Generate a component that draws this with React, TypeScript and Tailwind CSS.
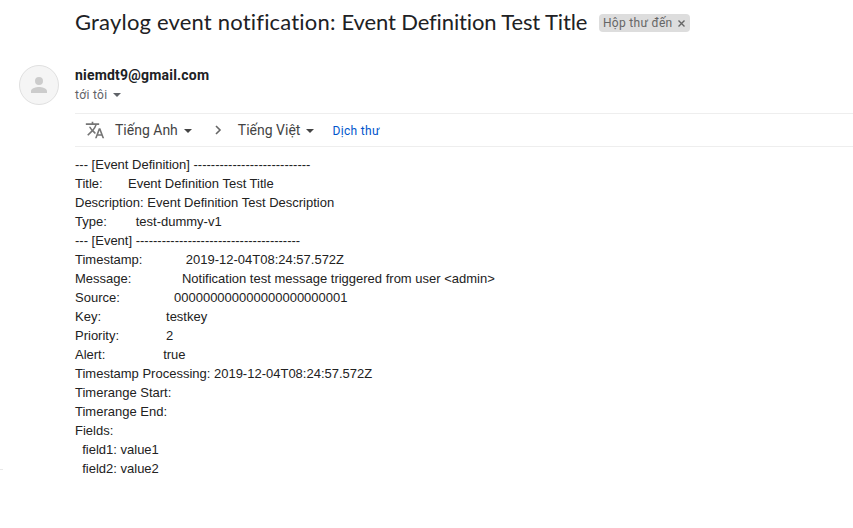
const lines = [
  '--- [Event Definition] ---------------------------',
  'Title:       Event Definition Test Title',
  'Description: Event Definition Test Description',
  'Type:        test-dummy-v1',
  '--- [Event] --------------------------------------',
  'Timestamp:            2019-12-04T08:24:57.572Z',
  'Message:              Notification test message triggered from user <admin>',
  'Source:               000000000000000000000001',
  'Key:                  testkey',
  'Priority:             2',
  'Alert:                true',
  'Timestamp Processing: 2019-12-04T08:24:57.572Z',
  'Timerange Start:',
  'Timerange End:',
  'Fields:',
  '  field1: value1',
  '  field2: value2',
];

function Caret({ className = '' }: { className?: string }) {
  return (
    <svg width="8" height="4" viewBox="0 0 8 4" className={className} fill="currentColor">
      <path d="M0 0h8L4 4z" />
    </svg>
  );
}

export default function App() {
  return (
    <main className="relative h-[528px] w-[853px] overflow-hidden bg-white font-[Roboto,sans-serif] text-[#202124]">
      <header className="flex h-[46px] items-center pl-[75px]">
        <h1 className="w-[524px] shrink-0 whitespace-nowrap pb-[3px] font-[Lato,sans-serif] text-[22px] leading-7">
          <span className="tracking-[0.19px]">Graylog event notification: </span>
          <span className="tracking-[-0.13px]">Event Definition Test Title</span>
        </h1>
        <div className="flex h-[18px] items-center rounded bg-[#ddd] pl-1 pr-[5px] text-[12px] tracking-[0.3px] text-[#666]">
          <span>Hộp thư đến</span>
          <svg className="ml-[5px]" width="7" height="7" viewBox="0 0 7 7" stroke="#666" strokeWidth="1.4"><path d="M.5 .5l6 6M6.5 .5l-6 6" /></svg>
        </div>
      </header>
      <section className="flex h-[67px] pl-[19px] pt-[19px]">
        <div className="flex size-10 items-center justify-center rounded-full border border-[#e0e0e0] bg-[#f5f5f5]">
          <svg width="24" height="24" viewBox="0 0 24 24" fill="#ccc"><path d="M12 12a4 4 0 1 0 0-8 4 4 0 0 0 0 8zm0 2c-2.67 0-8 1.34-8 4v2h16v-2c0-2.66-5.33-4-8-4z" /></svg>
        </div>
        <div className="pl-4">
          <div className="text-sm font-bold leading-5 tracking-[0.2px]">niemdt9@gmail.com</div>
          <div className="flex items-center text-[12px] leading-5 tracking-[0.3px] text-[#5f6368]">tới tôi<Caret className="ml-[6px]" /></div>
        </div>
      </section>
      <nav className="ml-[75px] flex h-[34px] items-center border-y border-[#eee] text-sm text-[#444]">
        <svg className="ml-[10px]" width="20" height="20" viewBox="0 0 24 24" fill="#757575"><path d="M12.87 15.07l-2.54-2.51.03-.03A17.52 17.52 0 0 0 14.07 6H17V4h-7V2H8v2H1v1.99h11.17C11.5 7.92 10.44 9.75 9 11.35 8.07 10.32 7.3 9.19 6.69 8h-2c.73 1.63 1.73 3.17 2.98 4.56l-5.09 5.02L4 19l5-5 3.11 3.11.76-2.04zM18.5 10h-2L12 22h2l1.12-3h4.75L21 22h2l-4.5-12zm-2.62 7l1.62-4.33L19.12 17h-3.24z" /></svg>
        <span className="ml-[10px]">Tiếng Anh</span><Caret className="ml-1.5 mt-0.5" />
        <svg className="ml-[23px]" width="7" height="10" viewBox="0 0 7 10" fill="none" stroke="#666" strokeWidth="1.6"><path d="M1 1l4 4-4 4" /></svg>
        <span className="ml-4">Tiếng Việt</span><Caret className="ml-1.5 mt-0.5" />
        <span className="ml-[18px] pt-1 text-[12px] tracking-[0.35px] text-[#0055cc]">Dịch thư</span>
      </nav>
      <pre className="pl-[75px] pt-2 font-['Liberation_Sans',sans-serif] text-[13px] leading-[19px] text-[#222]">{lines.join('\n')}</pre>
      <div className="absolute left-0 top-[469px] h-px w-[3px] bg-[#e8e8e8]" />
    </main>
  );
}
